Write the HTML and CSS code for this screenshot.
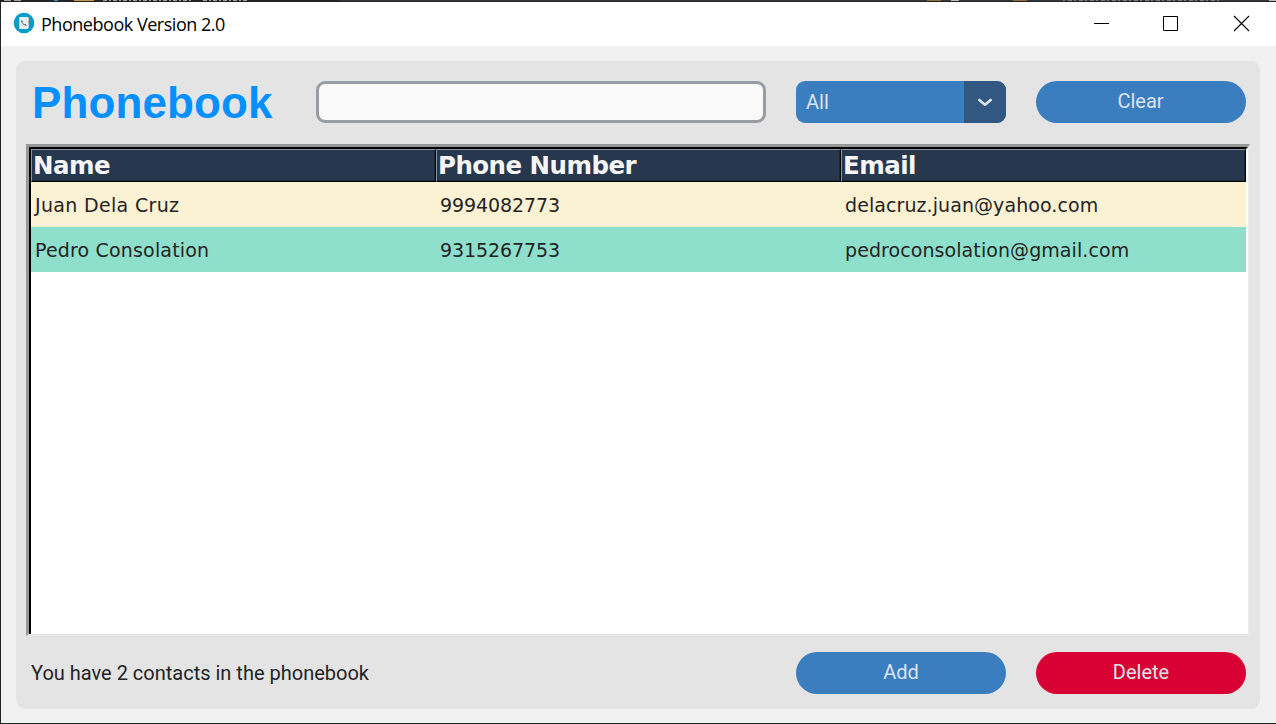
FILE: index.html
```
<!DOCTYPE html>
<html lang="en">
<head>
<meta charset="utf-8">
<title>Phonebook Version 2.0</title>
<link rel="stylesheet" href="styles.css">
</head>
<body>
<div class="window">
  <svg class="backdrop" width="1276" height="2" viewBox="0 0 1276 2" aria-hidden="true">
    <path fill="#222326" d="M0 0h1276v2H0z"/>
    <path fill="#343840" d="M340 0h936v1H340z"/>
    <path fill="#a5a7aa" d="M4 0h7v1H4zM14 0h7v1h-7z"/>
    <path fill="#3795b8" d="M54 0h4v1h-4z"/>
    <path fill="#c99a46" d="M74 0h20v1H74z"/>
    <path stroke="#a0a2a6" stroke-dasharray="4 2 2 2" d="M103 .5h89M203 .5h44"/>
    <path fill="#c0c0c0" d="M951 0h8v1h-8zM1269 0h7v1h-7z"/>
    <path fill="#8c7136" d="M927 0h14v1h-14zM1013 0h14v1h-14z"/>
    <path stroke="#7d8087" stroke-dasharray="2 3 4 2" d="M1063 .5h157"/>
  </svg>
  <header class="titlebar">
    <svg class="app-icon" width="22" height="22" viewBox="0 0 22 22" aria-hidden="true">
      <circle cx="11" cy="11" r="10.3" fill="#079bc7"/>
      <path d="M6.500 5H15v12H6.500z" fill="#e9eef3"/>
      <path d="M6 5h1v12H6z" fill="#b4d0de"/>
      <path d="M8.800 9.200c.2 2 1.600 3.500 3.800 3.800" fill="none" stroke="#5a6a78" stroke-width="1"/>
      <path d="M8.700 8.600l.5 1.500M12 12.900l1.300.2" stroke="#40515f" stroke-width="1.200"/>
      <path d="M15.500 8v2.500" stroke="#e2c08a"/>
      <path d="M15.500 5.500V8M15.500 11v5" stroke="#b9d4e0"/>
    </svg>
    <span class="caption">Phonebook Version 2.0</span>
    <div class="controls">
      <svg width="17" height="17" viewBox="0 0 17 17"><path d="M1 8.500h15" stroke="#000"/></svg>
      <svg width="17" height="17" viewBox="0 0 17 17"><path d="M.5 1.500h14v14H.5z" fill="none" stroke="#000"/></svg>
      <svg width="17" height="17" viewBox="0 0 17 17"><path d="M1 1l15 15M16 1L1 16" stroke="#000" stroke-width="1.100"/></svg>
    </div>
  </header>
  <main class="body">
    <section class="panel">
      <div class="toolbar">
        <h1 class="heading">Phonebook</h1>
        <input class="search" type="text" aria-label="Search">
        <div class="select">
          <span class="select-value">All</span>
          <span class="select-arrow">
            <svg width="16" height="10" viewBox="0 0 16 10"><path d="M2.300 3L8 7.700 13.700 3" fill="none" stroke="#dce4ee" stroke-width="2.700" stroke-linecap="round" stroke-linejoin="round"/></svg>
          </span>
        </div>
        <button class="button clear">Clear</button>
      </div>
      <div class="table-frame">
        <div class="table">
          <div class="row head"><span class="th">Name</span><span class="th">Phone Number</span><span class="th">Email</span></div>
          <div class="row odd"><span class="td name-a">Juan Dela Cruz</span><span class="td phone">9994082773</span><span class="td mail">delacruz.juan@yahoo.com</span></div>
          <div class="row even"><span class="td name-b">Pedro Consolation</span><span class="td phone">9315267753</span><span class="td mail">pedroconsolation@gmail.com</span></div>
        </div>
      </div>
      <footer class="footer">
        <span class="status">You have 2 contacts in the phonebook</span>
        <button class="button">Add</button>
        <button class="button danger">Delete</button>
      </footer>
    </section>
  </main>
</div>
</body>
</html>
```
FILE: styles.css
```
* { box-sizing: border-box; }
body { margin: 0; overflow: hidden; }
.window {
  width: 1276px; height: 724px;
  display: flex; flex-direction: column;
  background: #f1f1f1;
  border-left: 1px solid #222326;
  border-bottom: 1px solid #222326;
}
.backdrop { display: block; flex: none; margin-left: -1px; }
.titlebar {
  height: 44px; flex: none;
  display: flex; align-items: center;
  padding: 0 26px 0 12px;
  background: #fff;
}
.app-icon { margin-top: -2px; }
.caption {
  margin-left: 6px; margin-top: -1px;
  font: 18px/24px "Open Sans", sans-serif;
  letter-spacing: -0.47px; color: #000; white-space: nowrap;
}
.controls { display: flex; gap: 53px; margin-left: auto; margin-top: -1px; }
.controls svg { display: block; }
.body { flex: 1; padding: 15px 16px 14px 15px; }
.panel {
  height: 648px; padding: 20px 10px 15px;
  display: flex; flex-direction: column;
  background: #e4e4e4; border-radius: 9px;
}
.toolbar {
  height: 42px; flex: none;
  display: grid; grid-template-columns: 254px 450px 210px 210px; column-gap: 30px;
  padding-left: 6px;
}
.heading {
  margin: 0;
  font: bold 44px/44px "Liberation Sans", Arial, sans-serif;
  letter-spacing: 0.1px;
  color: #0690ff; white-space: nowrap;
}
.search {
  width: 100%; height: 42px; padding: 0 12px;
  border: 3px solid #979da2; border-radius: 9px; background: #f9f9fa;
  font: 20px Roboto, sans-serif; outline: none;
}
.select {
  display: flex; height: 42px; border-radius: 9px; overflow: hidden;
  background: #3b7ebf; color: #dce4ee;
  font: 20px/42px Roboto, sans-serif;
}
.select-value { flex: 1; padding-left: 10px; }
.select-arrow {
  width: 42px; background: #325780;
  display: flex; align-items: center; justify-content: center;
}
.button {
  width: 210px; height: 42px; padding: 0 0 2px;
  border: 0; border-radius: 21px;
  background: #3b7ebf; color: #dce4ee;
  font: 20px/40px Roboto, sans-serif;
}
.clear { padding-right: 1px; }
.danger { background: #d90033; }
.table-frame {
  height: 492px; flex: none; margin-top: 21px;
  border: solid; border-width: 3px 2px 2px 3px;
  border-color: #979797 #e8e8e8 #e6e6e6 #979797;
}
.table {
  height: 487px; background: #fff;
  border: solid; border-width: 2px 2px 0 2px;
  border-color: #000 #fff #fff #000;
}
.row { display: grid; grid-template-columns: repeat(3, 405px); }
.head { height: 33px; }
.th {
  height: 33px; padding-left: 1px;
  border: 1px solid; border-color: #8b949d #000 #000 #8b949d;
  box-shadow: inset -1px -1px #1c2938;
  background: #27374d; color: #f5f5f5;
  font: bold 24.500px/32px "DejaVu Sans", Verdana, sans-serif;
  letter-spacing: -0.54px;
}
.td {
  height: 45px; padding-left: 4px;
  color: #242424; white-space: nowrap;
  font: 19px/46px "DejaVu Sans", Verdana, sans-serif;
}
.name-a { letter-spacing: 0.33px; }
.name-b { letter-spacing: 0.17px; }
.phone { letter-spacing: -0.08px; }
.mail { letter-spacing: 0.08px; }
.odd { background: #fbf1d3; }
.even { background: #8edfcc; }
.footer {
  display: grid; grid-template-columns: 735px 210px 210px; column-gap: 30px;
  margin-top: 16px; padding-left: 5px;
}
.status { font: 20px/42px Roboto, sans-serif; color: #242424; }
```
